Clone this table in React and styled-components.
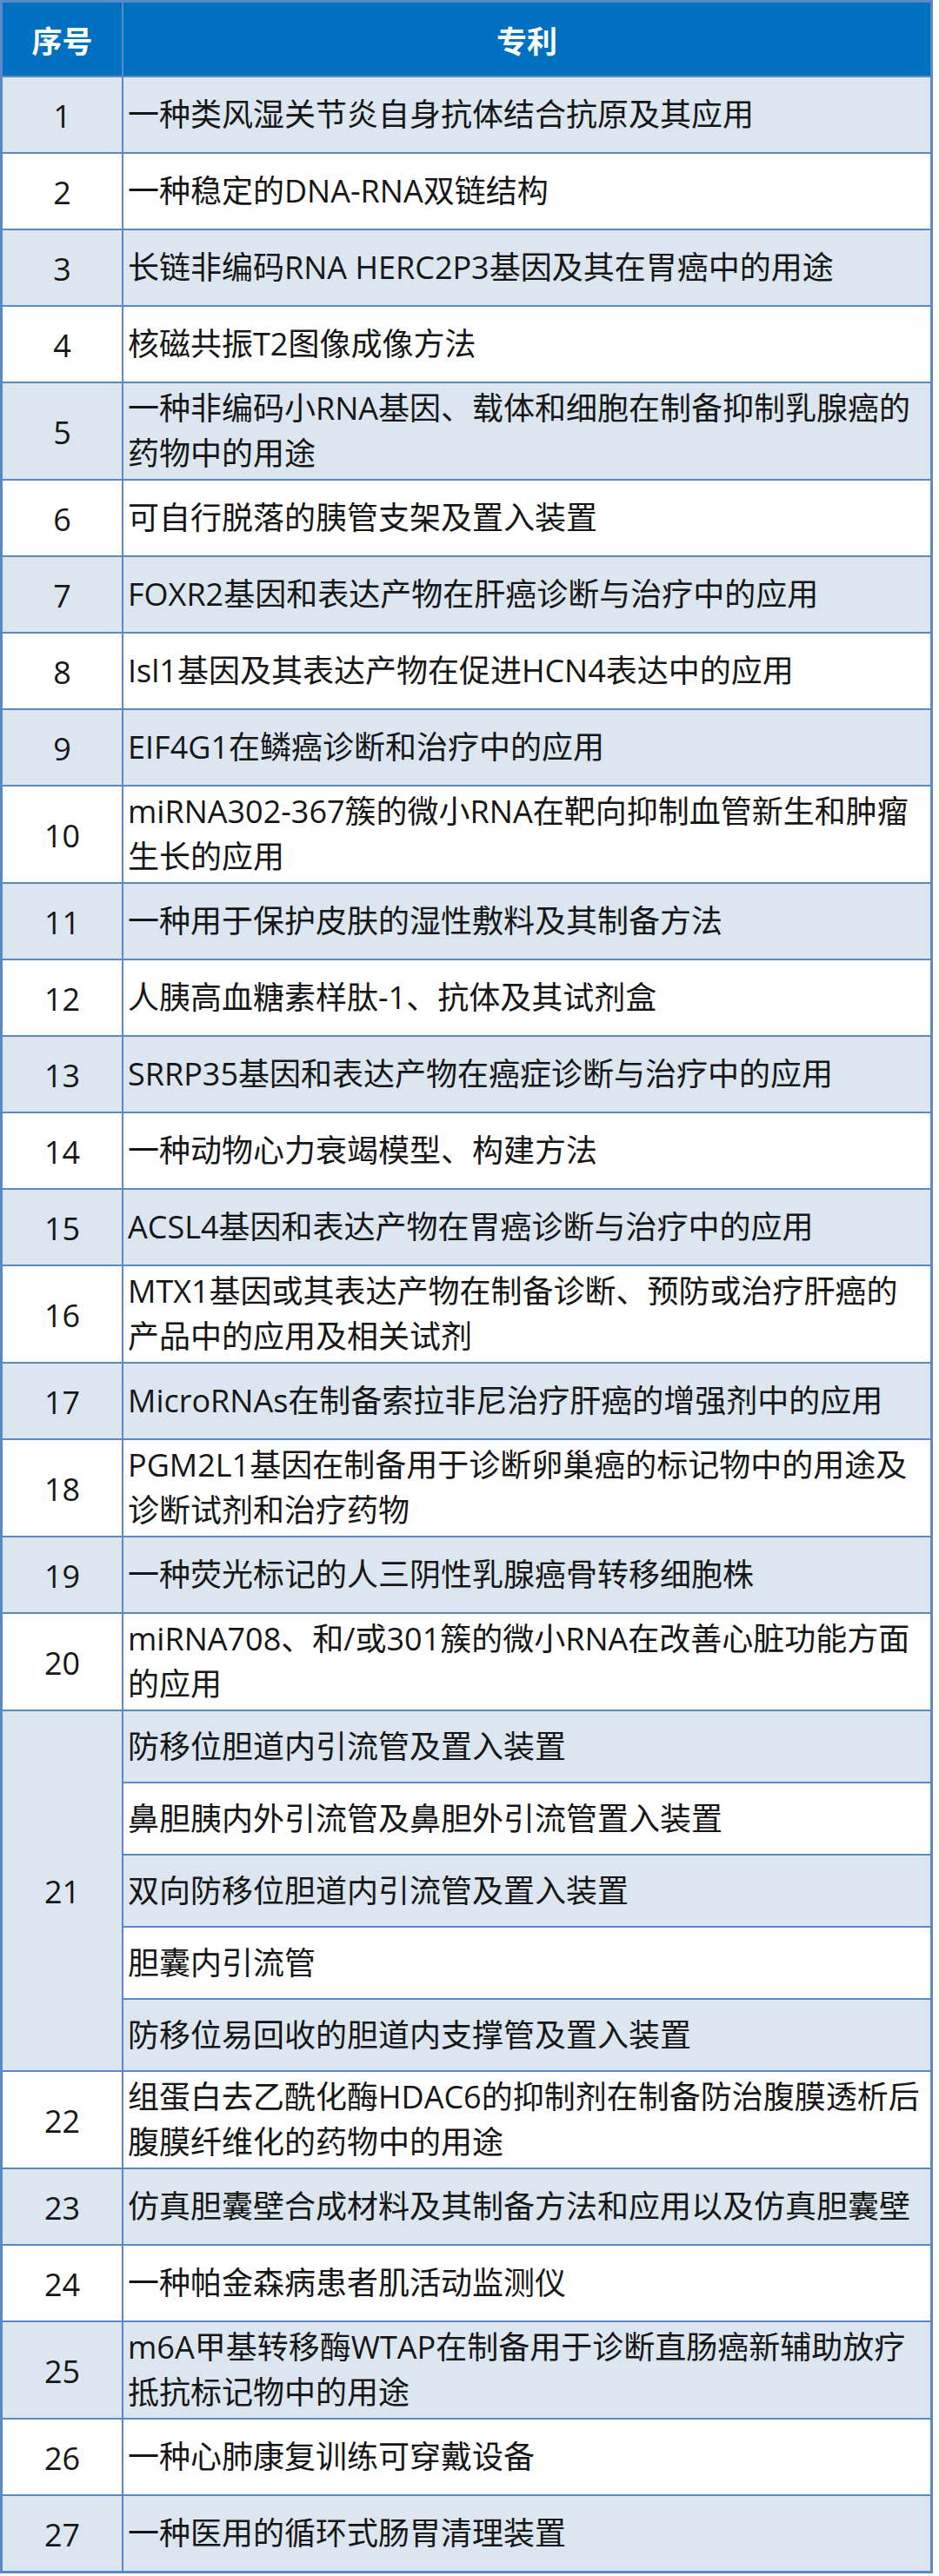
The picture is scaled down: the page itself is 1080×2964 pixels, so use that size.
import React from "react";
import styled, { createGlobalStyle } from "styled-components";

const GlobalStyle = createGlobalStyle`
  html, body {
    margin: 0;
    padding: 0;
    background: #ffffff;
  }
  body {
    font-family: "Open Sans", "Noto Sans CJK SC", sans-serif;
    color: #161616;
  }
`;

const BORDER = "#5b89c8";
const ALT = "#dce6f1";
const HEAD = "#0070c0";

const Table = styled.div`
  display: grid;
  grid-template-columns: 137px 1fr;
  gap: 2px;
  padding: 3px;
  width: 1073px;
  box-sizing: border-box;
  background: ${BORDER};
`;

const HeadCell = styled.div`
  height: 84px;
  background: ${HEAD};
  color: #ffffff;
  font-family: "Noto Sans CJK SC", sans-serif;
  font-weight: 700;
  font-size: 35px;
  display: flex;
  align-items: center;
  justify-content: center;
`;

const NumCell = styled.div`
  background: ${(p) => (p.$alt ? ALT : "#ffffff")};
  grid-row: ${(p) => (p.$span ? `span ${p.$span}` : "auto")};
  display: flex;
  align-items: center;
  justify-content: center;
  font-size: 36px;
  padding-top: 2px;
  box-sizing: border-box;
`;

const TextCell = styled.div`
  height: ${(p) => p.$h}px;
  background: ${(p) => (p.$alt ? ALT : "#ffffff")};
  display: flex;
  flex-direction: column;
  justify-content: center;
  padding-left: 5px;
  box-sizing: border-box;
  font-size: 36px;
  line-height: 52px;
`;

const Line = styled.span`
  display: block;
  white-space: nowrap;
`;

const rows = [
  { no: 1, lines: ["一种类风湿关节炎自身抗体结合抗原及其应用"] },
  { no: 2, lines: ["一种稳定的DNA-RNA双链结构"] },
  { no: 3, lines: ["长链非编码RNA HERC2P3基因及其在胃癌中的用途"] },
  { no: 4, lines: ["核磁共振T2图像成像方法"] },
  { no: 5, lines: ["一种非编码小RNA基因、载体和细胞在制备抑制乳腺癌的", "药物中的用途"] },
  { no: 6, lines: ["可自行脱落的胰管支架及置入装置"] },
  { no: 7, lines: ["FOXR2基因和表达产物在肝癌诊断与治疗中的应用"] },
  { no: 8, lines: ["Isl1基因及其表达产物在促进HCN4表达中的应用"] },
  { no: 9, lines: ["EIF4G1在鳞癌诊断和治疗中的应用"] },
  { no: 10, lines: ["miRNA302-367簇的微小RNA在靶向抑制血管新生和肿瘤", "生长的应用"] },
  { no: 11, lines: ["一种用于保护皮肤的湿性敷料及其制备方法"] },
  { no: 12, lines: ["人胰高血糖素样肽-1、抗体及其试剂盒"] },
  { no: 13, lines: ["SRRP35基因和表达产物在癌症诊断与治疗中的应用"] },
  { no: 14, lines: ["一种动物心力衰竭模型、构建方法"] },
  { no: 15, lines: ["ACSL4基因和表达产物在胃癌诊断与治疗中的应用"] },
  { no: 16, lines: ["MTX1基因或其表达产物在制备诊断、预防或治疗肝癌的", "产品中的应用及相关试剂"] },
  { no: 17, lines: ["MicroRNAs在制备索拉非尼治疗肝癌的增强剂中的应用"] },
  { no: 18, lines: ["PGM2L1基因在制备用于诊断卵巢癌的标记物中的用途及", "诊断试剂和治疗药物"] },
  { no: 19, lines: ["一种荧光标记的人三阴性乳腺癌骨转移细胞株"] },
  { no: 20, lines: ["miRNA708、和/或301簇的微小RNA在改善心脏功能方面", "的应用"] },
  {
    no: 21,
    subs: [
      "防移位胆道内引流管及置入装置",
      "鼻胆胰内外引流管及鼻胆外引流管置入装置",
      "双向防移位胆道内引流管及置入装置",
      "胆囊内引流管",
      "防移位易回收的胆道内支撑管及置入装置",
    ],
  },
  { no: 22, lines: ["组蛋白去乙酰化酶HDAC6的抑制剂在制备防治腹膜透析后", "腹膜纤维化的药物中的用途"] },
  { no: 23, lines: ["仿真胆囊壁合成材料及其制备方法和应用以及仿真胆囊壁"] },
  { no: 24, lines: ["一种帕金森病患者肌活动监测仪"] },
  { no: 25, lines: ["m6A甲基转移酶WTAP在制备用于诊断直肠癌新辅助放疗", "抵抗标记物中的用途"] },
  { no: 26, lines: ["一种心肺康复训练可穿戴设备"] },
  { no: 27, lines: ["一种医用的循环式肠胃清理装置"] },
];

export default function App() {
  return (
    <>
      <GlobalStyle />
      <Table>
        <HeadCell>序号</HeadCell>
        <HeadCell>专利</HeadCell>
        {rows.map((row) => {
          const alt = row.no % 2 === 1;
          if (row.subs) {
            return (
              <React.Fragment key={row.no}>
                <NumCell $alt={alt} $span={row.subs.length}>
                  {row.no}
                </NumCell>
                {row.subs.map((s, i) => (
                  <TextCell key={i} $h={81} $alt={i % 2 === 0}>
                    <Line>{s}</Line>
                  </TextCell>
                ))}
              </React.Fragment>
            );
          }
          return (
            <React.Fragment key={row.no}>
              <NumCell $alt={alt}>{row.no}</NumCell>
              <TextCell $h={row.lines.length > 1 ? 110 : 86} $alt={alt}>
                {row.lines.map((l, i) => (
                  <Line key={i}>{l}</Line>
                ))}
              </TextCell>
            </React.Fragment>
          );
        })}
      </Table>
    </>
  );
}
